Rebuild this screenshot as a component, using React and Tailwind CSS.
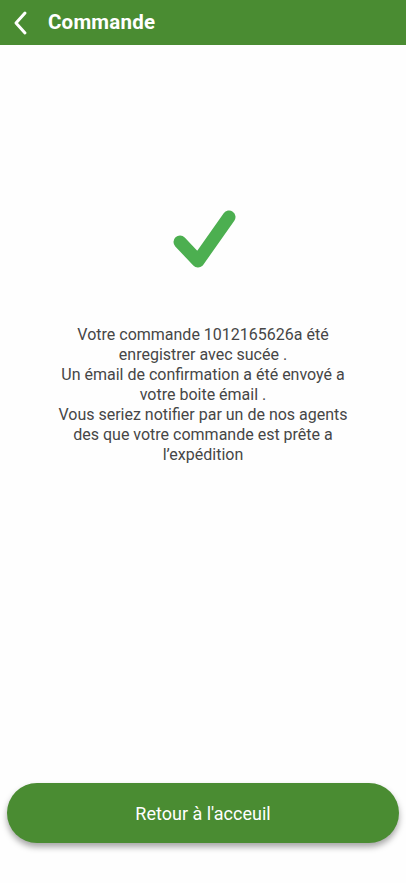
function Header() {
  return (
    <div className="flex items-center h-[45px] bg-[#4a8c32] text-white">
      <button className="w-[40px] h-[45px] flex items-center justify-center pl-[2px]">
        <svg width="16" height="26" viewBox="0 0 16 26" fill="none">
          <path d="M12 3 L3 13 L12 23" stroke="white" strokeWidth="3" strokeLinecap="round" strokeLinejoin="round" />
        </svg>
      </button>
      <h1 className="ml-[8px] text-[20.5px] font-bold tracking-[0.2px]">Commande</h1>
    </div>
  );
}

export default function App() {
  return (
    <div className="h-[883px] flex flex-col bg-[#fefefe] font-['Roboto',sans-serif]">
      <Header />
      <div className="flex-1 flex flex-col items-center pt-[160px]">
        <svg width="72" height="72" viewBox="0 0 72 72" fill="none" className="ml-[3px]">
          <path
            d="M11 37 L29 56 L60 12"
            stroke="#4caf50"
            strokeWidth="13"
            strokeLinecap="round"
            strokeLinejoin="round"
          />
        </svg>
        <p className="mt-[48px] text-center text-[16px] leading-[20px] text-[#464646]">
          Votre commande 1012165626a été
          <br />
          enregistrer avec sucée .
          <br />
          Un émail de confirmation a été envoyé a
          <br />
          votre boite émail .
          <br />
          Vous seriez notifier par un de nos agents
          <br />
          des que votre commande est prête a
          <br />
          l’expédition
        </p>
      </div>
      <div className="px-[7px] pb-[40px]">
        <button className="w-full h-[60px] rounded-full bg-[#4a8c32] text-white text-[18px] shadow-[0_4px_6px_rgba(0,0,0,0.35)]">
          Retour à l'acceuil
        </button>
      </div>
    </div>
  );
}
